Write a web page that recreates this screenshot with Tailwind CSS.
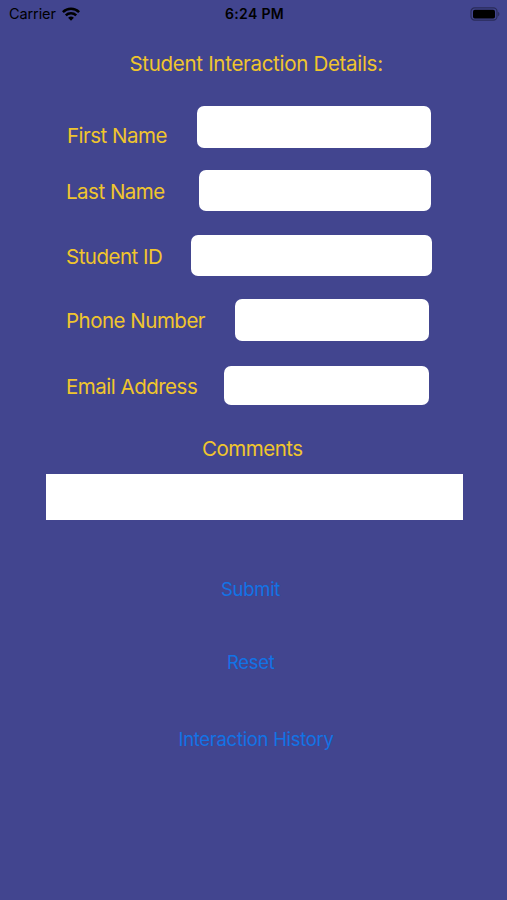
<!DOCTYPE html>
<html lang="en">

<head>
  <meta charset="UTF-8">
  <meta name="viewport" content="width=device-width, initial-scale=1.0">
  <title>Student Interaction Details</title>
  <script src="https://cdn.jsdelivr.net/npm/@tailwindcss/browser@4"></script>
</head>

<body class="h-screen overflow-hidden bg-[#42458f] font-[Inter,sans-serif] whitespace-nowrap">
  <!-- status bar -->
  <header class="grid grid-cols-3 items-center h-[27px] pl-[9px] pr-[7px] text-black text-[14.5px]">
    <div class="flex items-center gap-[6px]">
      <span class="tracking-[-0.1px]">Carrier</span>
      <svg class="w-[18px] h-[14px]" viewBox="0 0 18 14" fill="none" stroke="#000" stroke-width="2.5">
        <path d="M0.9 5.2a11.5 11.5 0 0 1 16.2 0" />
        <path d="M3.8 8.4a7.4 7.4 0 0 1 10.4 0" />
        <path d="M9 13.8L6.1 10.8a4.2 4.2 0 0 1 5.8 0z" fill="#000" stroke="none" />
      </svg>
    </div>
    <span class="text-center font-semibold text-[14px] tracking-[0.35px]">6:24 PM</span>
    <svg class="justify-self-end w-[30px] h-[14px]" viewBox="0 0 30 14">
      <rect x="1" y="0.9" width="26" height="12.2" rx="3.6" fill="none" stroke="#000" stroke-opacity="0.38" stroke-width="1.2" />
      <rect x="3" y="2.7" width="22" height="8.8" rx="1.8" fill="#000" />
      <path d="M28.2 4.7v4.6c1.6-.7 1.6-3.9 0-4.6z" fill="#000" fill-opacity="0.4" />
    </svg>
  </header>

  <form class="flex flex-col text-[#f0c52d] text-[20.5px] leading-6 tracking-[-0.5px]">
    <h1 class="mt-[25px] ml-[129.5px] w-[254px] tracking-[-0.3px]">Student Interaction Details:</h1>

    <div class="flex justify-between mt-[30px] ml-[67px] mr-[76.5px] h-[41.5px]">
      <label for="first" class="mt-[18px]">First Name</label>
      <input id="first" type="text" class="w-[234px] h-full px-2 rounded-[7px] bg-white">
    </div>
    <div class="flex justify-between mt-[22px] ml-[66px] mr-[76.5px] h-[41.5px]">
      <label for="last" class="mt-[10px]">Last Name</label>
      <input id="last" type="text" class="w-[231.5px] h-full px-2 rounded-[7px] bg-white">
    </div>
    <div class="flex justify-between mt-[23.5px] ml-[66px] mr-[75px] h-[41.5px]">
      <label for="student" class="mt-[10px]">Student ID</label>
      <input id="student" type="text" class="w-[241.5px] h-full px-2 rounded-[7px] bg-white">
    </div>
    <div class="flex justify-between mt-[23px] ml-[66px] mr-[78px] h-[41.5px]">
      <label for="phone" class="mt-[10px]">Phone Number</label>
      <input id="phone" type="tel" class="w-[194.5px] h-full px-2 rounded-[7px] bg-white">
    </div>
    <div class="flex justify-between mt-[25.5px] ml-[66px] mr-[78.5px] h-[39px]">
      <label for="email" class="mt-[9px]">Email Address</label>
      <input id="email" type="email" class="w-[205px] h-full px-2 rounded-[7px] bg-white">
    </div>

    <label for="comments" class="mt-[32px] ml-[202px]">Comments</label>
    <textarea id="comments" class="mt-[12.5px] ml-[46px] w-[417px] h-[46.5px] resize-none bg-white"></textarea>

    <div class="flex flex-col items-start text-[#1273e6] text-[18.5px] tracking-[-0.3px]">
      <button type="submit" class="mt-[57px] ml-[221px]">Submit</button>
      <button type="reset" class="mt-[49px] ml-[227px]">Reset</button>
      <button type="button" class="mt-[53px] ml-[178.5px]">Interaction History</button>
    </div>
  </form>
</body>

</html>
